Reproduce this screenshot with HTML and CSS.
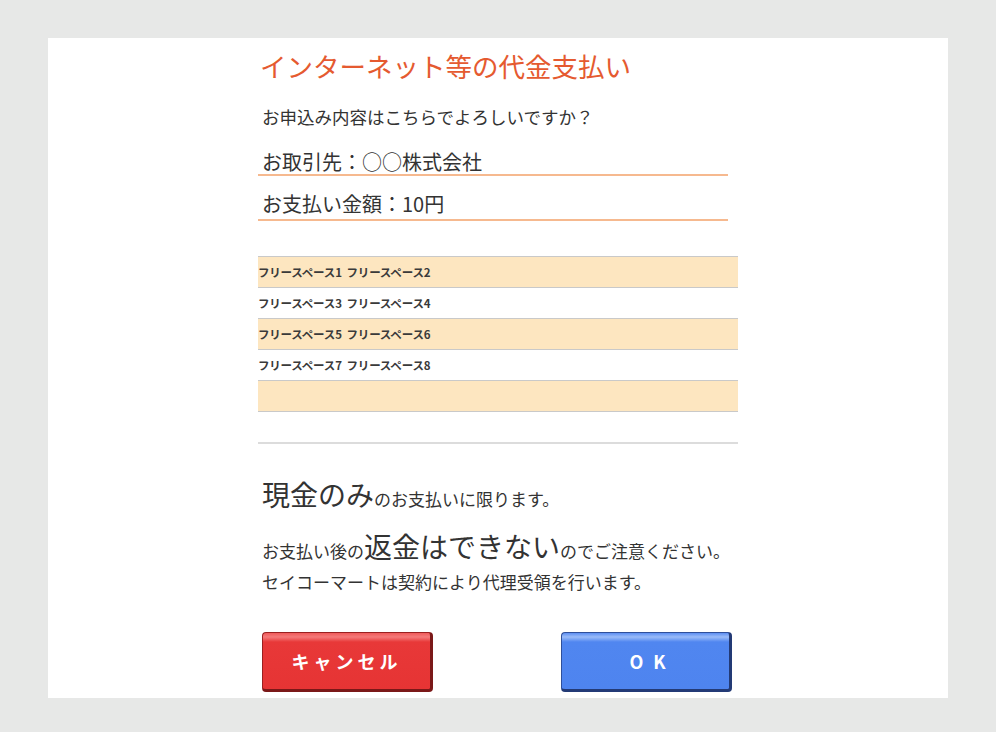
FILE: index.html
```html
<!DOCTYPE html>
<html lang="ja">

<head>
  <meta charset="UTF-8">
  <meta name="viewport" content="width=device-width, initial-scale=1.0">
  <title>インターネット等の代金支払い</title>
  <link rel="stylesheet" href="styles.css">
</head>

<body>
  <div class="panel">
    <div class="contenido">
      <h1 class="titulo">インターネット等の代金支払い</h1>
      <p class="pergunta">お申込み内容はこちらでよろしいですか？</p>
      <p class="campo">お取引先：○○株式会社</p>
      <p class="campo campo-valor">お支払い金額：10円</p>

      <table class="livre">
        <tbody>
          <tr class="par"><td>フリースペース1&nbsp;&nbsp;フリースペース2</td></tr>
          <tr><td>フリースペース3&nbsp;&nbsp;フリースペース4</td></tr>
          <tr class="par"><td>フリースペース5&nbsp;&nbsp;フリースペース6</td></tr>
          <tr><td>フリースペース7&nbsp;&nbsp;フリースペース8</td></tr>
          <tr class="par"><td></td></tr>
          <tr class="ultima"><td></td></tr>
        </tbody>
      </table>

      <div class="aviso">
        <p class="linha1"><span class="grande">現金のみ</span>のお支払いに限ります。</p>
        <p class="linha2">お支払い後の<span class="grande">返金はできない</span>のでご注意ください。</p>
        <p class="linha3">セイコーマートは契約により代理受領を行います。</p>
      </div>

      <div class="botoes">
        <button class="btn btn-cancelar">キャンセル</button>
        <button class="btn btn-ok">OK</button>
      </div>
    </div>
  </div>
</body>

</html>
```

FILE: styles.css
```css
body {
  font-family: "Noto Sans CJK JP", "Noto Sans", sans-serif;
  margin: 0;
  padding: 0;
  background-color: #e7e8e7;
  color: #333;
}

.panel {
  width: 900px;
  height: 660px;
  margin: 38px 0 0 48px;
  background-color: #fff;
  overflow: hidden;
}

.contenido {
  width: 480px;
  margin-left: 210px;
  padding-top: 8px;
}

.titulo {
  margin: 0;
  padding-left: 2px;
  height: 40px;
  line-height: 40px;
  font-size: 26.5px;
  font-weight: normal;
  color: #e55a30;
}

.pergunta {
  margin: 16px 0 0;
  padding-left: 4px;
  height: 30px;
  line-height: 30px;
  font-size: 17.5px;
}

.campo {
  width: 466px;
  margin: 18px 0 0;
  padding: 0 0 0 4px;
  height: 24px;
  line-height: 24px;
  font-size: 20px;
  border-bottom: 2px solid #f6b98f;
}

.campo-valor {
  margin-top: 16px;
  padding-bottom: 3px;
}

.livre {
  width: 480px;
  margin-top: 35px;
  border-collapse: collapse;
}

.livre td {
  height: 30px;
  padding: 0;
  border-top: 1px solid #c9c9c9;
  font-size: 11.5px;
  font-weight: bold;
  letter-spacing: -0.2px;
  color: #3a3a3a;
  white-space: nowrap;
}

.livre .par td {
  background-color: #fde6c0;
}

.livre .ultima td {
  border-bottom: 2px solid #dcdcdc;
}

.aviso {
  margin-top: 35px;
  padding-left: 4px;
}

.aviso p {
  margin: 0;
  font-size: 17px;
}

.aviso .grande {
  font-size: 28px;
  line-height: 1;
}

.linha1 {
  height: 40px;
  line-height: 40px;
}

.linha2 {
  margin-top: 13px !important;
  height: 36px;
  line-height: 36px;
}

.linha3 {
  height: 28px;
  line-height: 28px;
}

.botoes {
  display: flex;
  justify-content: space-between;
  width: 470px;
  margin: 36px 0 0 4px;
}

.btn {
  width: 171px;
  height: 60px;
  border-radius: 4px;
  font-family: inherit;
  font-size: 18px;
  font-weight: bold;
  color: #fff;
  cursor: pointer;
}

.btn-cancelar {
  background: linear-gradient(#f05a5a 0, #f47a7a 4px, #e83838 9px, #e63434 100%);
  border: 1px solid #9a2020;
  border-right: 3px solid #7a1818;
  border-bottom: 3px solid #7a1818;
  letter-spacing: 4px;
}

.btn-ok {
  background: linear-gradient(#5d8ff2 0, #9abbf8 4px, #5086f0 9px, #4e84ef 100%);
  border: 1px solid #2f4f9a;
  border-right: 3px solid #233a75;
  border-bottom: 3px solid #233a75;
  letter-spacing: 10px;
  padding-left: 20px;
}
```
